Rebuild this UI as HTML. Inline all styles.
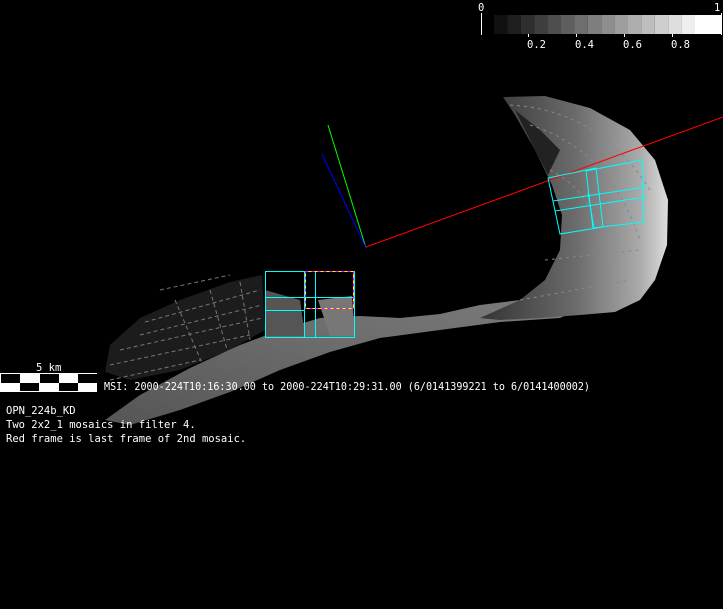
<!DOCTYPE html>
<html><head><meta charset="utf-8"><style>
html,body{margin:0;padding:0;background:#000;}
body{width:723px;height:609px;overflow:hidden;position:relative;}
svg{position:absolute;left:0;top:0;}
.t{font-family:"DejaVu Sans Mono","Liberation Mono",monospace;font-size:10.5px;fill:#fff;}
</style></head><body>
<svg width="723" height="609" viewBox="0 0 723 609">
<defs>
<linearGradient id="gR" x1="0" y1="0" x2="1" y2="0">
<stop offset="0" stop-color="#333"/><stop offset="0.5" stop-color="#6a6a6a"/><stop offset="0.85" stop-color="#aaa"/><stop offset="1" stop-color="#ddd"/>
</linearGradient>
<linearGradient id="gL" x1="0" y1="1" x2="1" y2="0">
<stop offset="0" stop-color="#555"/><stop offset="0.5" stop-color="#6a6a6a"/><stop offset="1" stop-color="#7c7c7c"/>
</linearGradient>
</defs>
<!-- sparse left mesh -->
<polygon points="140,318 180,300 230,282 262,275 265,330 230,350 180,370 130,380 105,372 110,345" fill="#1c1c1c"/>
<g stroke="#777" stroke-width="1" stroke-dasharray="4 3" fill="none">
<path d="M145,322 L260,290 M140,335 L262,305 M120,350 L262,318 M110,365 L250,335 M175,300 L205,370 M210,290 L230,360 M240,282 L250,340 M160,290 L230,275 M110,380 L200,360"/>
</g>
<!-- left band -->
<polygon points="105,420 140,395 190,368 240,345 280,330 320,318 360,316 400,318 440,314 480,305 520,300 560,305 600,300 560,318 500,322 440,330 380,338 330,352 280,370 230,392 180,410 130,425" fill="url(#gL)"/>
<polygon points="265,290 300,300 305,336 265,336" fill="#555"/>
<polygon points="318,300 352,296 355,336 330,336" fill="#777"/>
<!-- right crescent -->
<polygon points="503,97 545,96 590,108 630,130 655,160 668,200 667,245 655,280 640,300 615,312 580,315 540,318 500,320 480,318 520,300 545,280 560,250 562,215 552,185 535,150 515,115" fill="url(#gR)"/>
<polygon points="515,110 540,130 560,150 548,175 535,150" fill="#222"/>
<g stroke="#888" stroke-width="1" stroke-dasharray="3 4" fill="none">
<path d="M510,105 Q600,110 650,190 M530,125 Q610,150 640,240 M550,170 Q610,200 610,300 M545,260 L640,250 M520,300 L630,280"/>
</g>
<!-- axes -->
<line x1="366" y1="248" x2="328" y2="125" stroke="#0f0" stroke-width="1"/>
<line x1="366" y1="248" x2="322" y2="154" stroke="#00f" stroke-width="1"/>
<line x1="366" y1="247" x2="723" y2="117" stroke="#f00" stroke-width="1"/>
<!-- left frames -->
<g stroke="#0ff" stroke-width="1" fill="none">
<rect x="265.5" y="271.5" width="89" height="66"/>
<line x1="265" y1="297.5" x2="355" y2="297.5"/>
<line x1="265" y1="310.5" x2="305" y2="310.5"/>
<line x1="304.5" y1="271" x2="304.5" y2="337"/>
<line x1="315.5" y1="271" x2="315.5" y2="337"/>
</g>
<rect x="305.5" y="271.5" width="48" height="37" fill="none" stroke="#ff0" stroke-width="1"/>
<rect x="305.5" y="271.5" width="48" height="37" fill="none" stroke="#f0f" stroke-width="1" stroke-dasharray="3 3"/>
<!-- right frames -->
<g stroke="#0ff" stroke-width="1" fill="none">
<polygon points="548,178 596,168 603,227 560,234"/>
<polygon points="586,171 642,160 644,222 593,228"/>
<line x1="553" y1="201" x2="646" y2="187"/>
<line x1="555" y1="211" x2="645" y2="197"/>
<line x1="588" y1="193" x2="594" y2="228"/>
</g>
<!-- colorbar -->
<g>
<rect x="494" y="15" width="13.4" height="19" fill="#111"/>
<rect x="507.4" y="15" width="13.4" height="19" fill="#1e1e1e"/>
<rect x="520.8" y="15" width="13.4" height="19" fill="#2e2e2e"/>
<rect x="534.2" y="15" width="13.4" height="19" fill="#3e3e3e"/>
<rect x="547.6" y="15" width="13.4" height="19" fill="#4e4e4e"/>
<rect x="561" y="15" width="13.4" height="19" fill="#5e5e5e"/>
<rect x="574.4" y="15" width="13.4" height="19" fill="#6e6e6e"/>
<rect x="587.8" y="15" width="13.4" height="19" fill="#7e7e7e"/>
<rect x="601.2" y="15" width="13.4" height="19" fill="#8e8e8e"/>
<rect x="614.6" y="15" width="13.4" height="19" fill="#9e9e9e"/>
<rect x="628" y="15" width="13.4" height="19" fill="#aeaeae"/>
<rect x="641.4" y="15" width="13.4" height="19" fill="#bebebe"/>
<rect x="654.8" y="15" width="13.4" height="19" fill="#cecece"/>
<rect x="668.2" y="15" width="13.4" height="19" fill="#dedede"/>
<rect x="681.6" y="15" width="13.4" height="19" fill="#eee"/>
<rect x="695" y="15" width="26" height="19" fill="#fff"/>
<line x1="481.5" y1="13" x2="481.5" y2="35" stroke="#fff"/>
<line x1="721.5" y1="13" x2="721.5" y2="35" stroke="#fff"/>
<line x1="528.5" y1="34" x2="528.5" y2="37" stroke="#fff"/>
<line x1="576.5" y1="34" x2="576.5" y2="37" stroke="#fff"/>
<line x1="624.5" y1="34" x2="624.5" y2="37" stroke="#fff"/>
<line x1="672.5" y1="34" x2="672.5" y2="37" stroke="#fff"/>
<text class="t" x="478" y="11">0</text>
<text class="t" x="714" y="11">1</text>
<text class="t" x="527" y="48">0.2</text>
<text class="t" x="575" y="48">0.4</text>
<text class="t" x="623" y="48">0.6</text>
<text class="t" x="671" y="48">0.8</text>
</g>
<!-- scale bar -->
<rect x="0.5" y="373.5" width="96" height="18" fill="#fff" stroke="#fff"/>
<rect x="1" y="374" width="19" height="9" fill="#000"/>
<rect x="40" y="374" width="19" height="9" fill="#000"/>
<rect x="78" y="374" width="19" height="9" fill="#000"/>
<rect x="20" y="383" width="19" height="8" fill="#000"/>
<rect x="59" y="383" width="19" height="8" fill="#000"/>
<text class="t" x="36" y="371">5 km</text>
<text class="t" x="104" y="390" textLength="486" lengthAdjust="spacingAndGlyphs">MSI:  2000-224T10:16:30.00 to 2000-224T10:29:31.00 (6/0141399221 to 6/0141400002)</text>
<text class="t" x="6" y="414">OPN_224b_KD</text>
<text class="t" x="6" y="428">Two 2x2_1 mosaics in filter 4.</text>
<text class="t" x="6" y="442">Red frame is last frame of 2nd mosaic.</text>
</svg>
</body></html>
